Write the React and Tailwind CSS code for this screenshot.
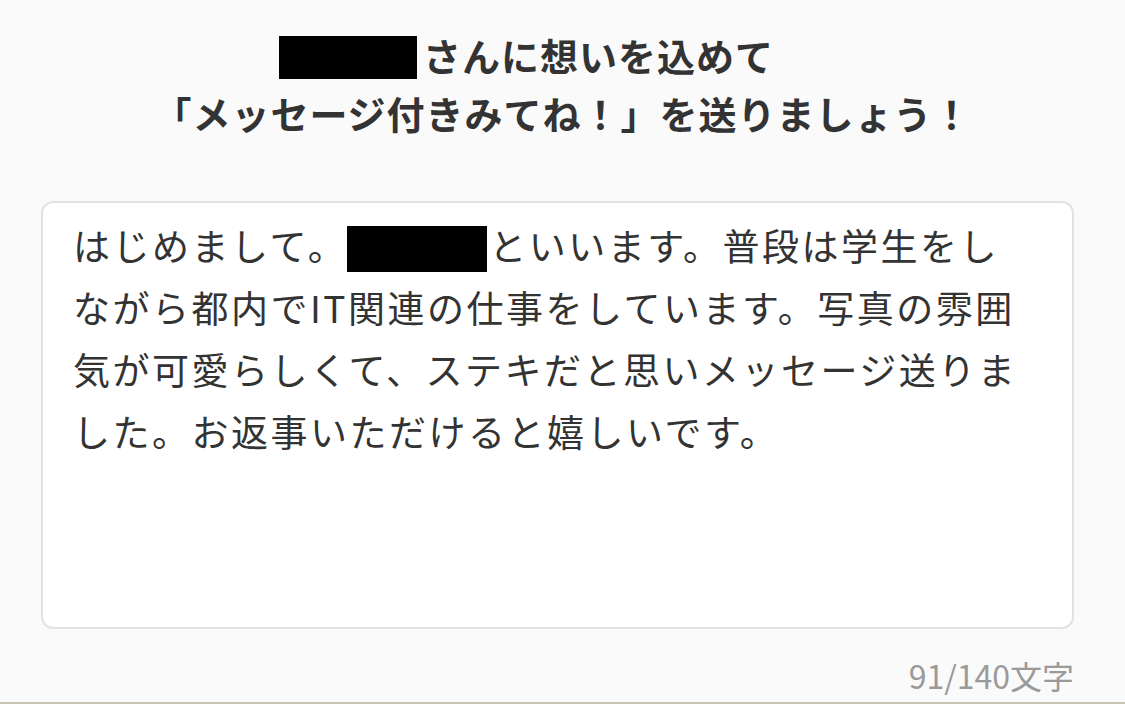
import React from "react";

const font = { fontFamily: '"Noto Sans CJK JP", "Noto Sans", sans-serif' };

function Redacted({ className }) {
  return <span className={`inline-block bg-black align-middle ${className}`}></span>;
}

export default function App() {
  const lines = [
    "ながら都内でIT関連の仕事をしています。写真の雰囲",
    "気が可愛らしくて、ステキだと思いメッセージ送りま",
    "した。お返事いただけると嬉しいです。",
  ];

  return (
    <div className="w-[1125px] h-[704px] bg-[#fafafa] border-b-2 border-[#c8c4b4] overflow-hidden" style={font}>
      <div className="pt-[26px] text-center font-bold text-[38px] leading-[58px] tracking-[1px] text-[#333333]">
        <div className="pr-[72px]">
          <Redacted className="w-[138px] h-[43px] -mt-[6px] mr-[6px]" />
          さんに想いを込めて
        </div>
        <div>「メッセージ付きみてね！」を送りましょう！</div>
      </div>

      <div className="ml-[41px] w-[1033px] mt-[59px] h-[428px] rounded-[12px] border-2 border-[#e2e2e2] bg-white px-[30px] pt-[11px]">
        <div className="text-[37px] leading-[62px] tracking-[2.5px] text-[#333333] whitespace-nowrap">
          <div>
            はじめまして。
            <Redacted className="w-[140px] h-[46px] -mt-[4px] mr-[2px]" />
            といいます。普段は学生をし
          </div>
          {lines.map((l) => (
            <div key={l}>{l}</div>
          ))}
        </div>
      </div>

      <div className="w-[1074px] mt-[26px] text-right text-[32px] leading-[40px] text-[#9a9a9a]">
        91/140文字
      </div>
    </div>
  );
}
